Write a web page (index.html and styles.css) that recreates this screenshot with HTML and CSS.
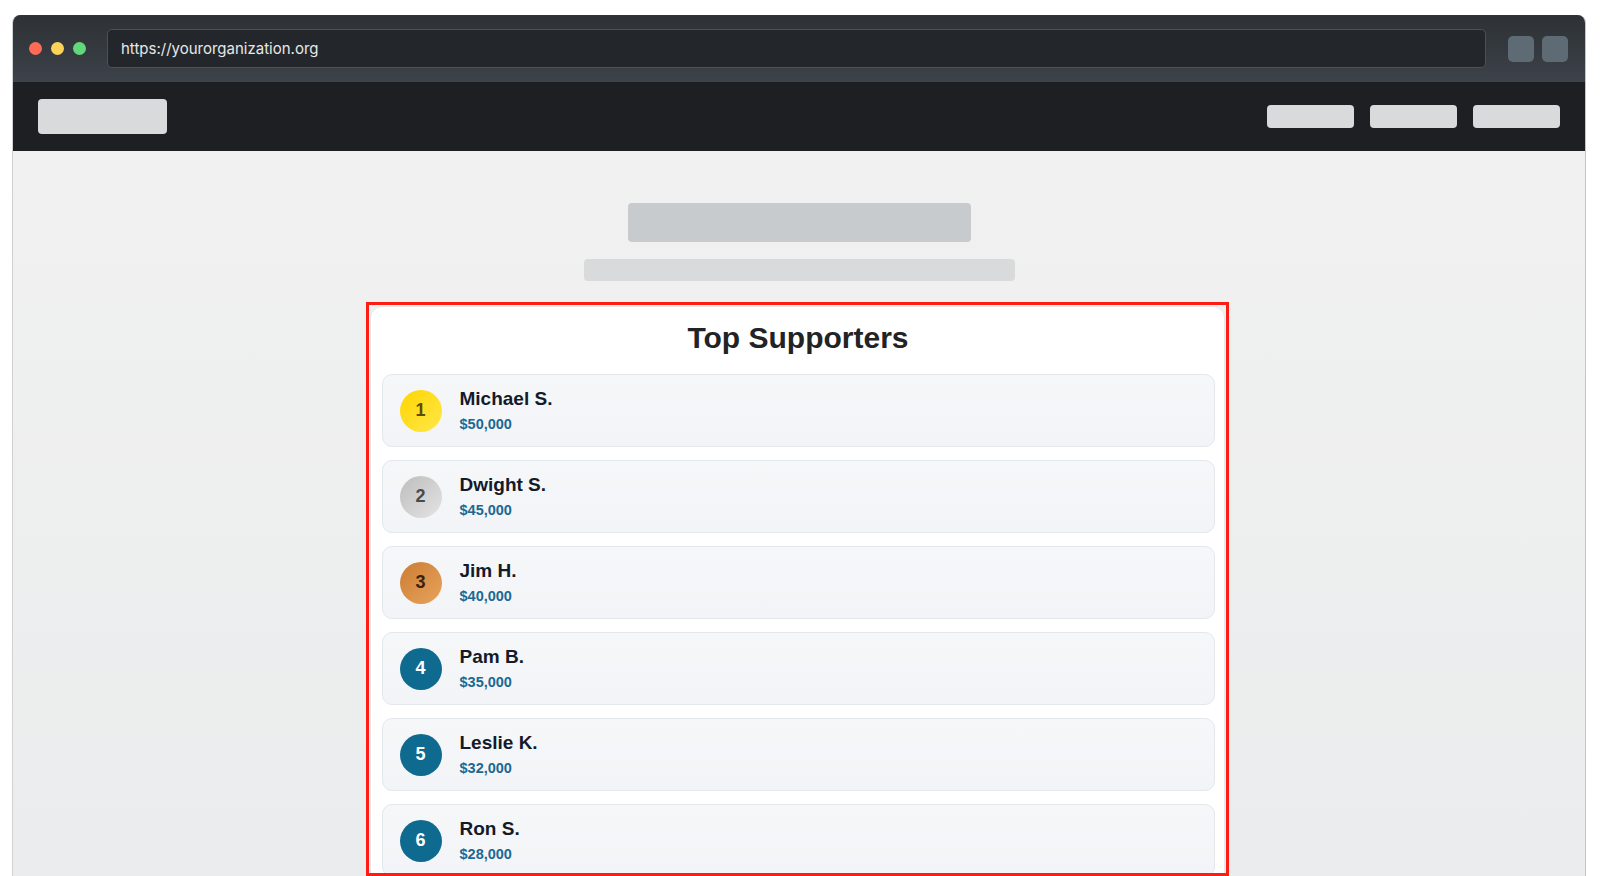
FILE: index.html
```html
<!DOCTYPE html>
<html lang="en">
<head>
<meta charset="utf-8">
<title>Top Supporters</title>
<link rel="stylesheet" href="styles.css">
</head>
<body>
<div class="window">
  <div class="chrome">
    <div class="lights">
      <span class="light red"></span>
      <span class="light yellow"></span>
      <span class="light green"></span>
    </div>
    <div class="url">https://yourorganization.org</div>
    <div class="chrome-btns">
      <span class="chrome-btn"></span>
      <span class="chrome-btn"></span>
    </div>
  </div>
  <div class="nav">
    <div class="logo-ph"></div>
    <div class="nav-links">
      <span class="nav-ph"></span>
      <span class="nav-ph"></span>
      <span class="nav-ph"></span>
    </div>
  </div>
  <div class="content">
    <div class="title-ph"></div>
    <div class="sub-ph"></div>
    <div class="highlight">
      <section class="card">
        <h2 class="card-title">Top Supporters</h2>
        <ul class="list">
          <li class="row">
            <span class="rank rank-1">1</span>
            <div class="info"><div class="name">Michael S.</div><div class="amount">$50,000</div></div>
          </li>
          <li class="row">
            <span class="rank rank-2">2</span>
            <div class="info"><div class="name">Dwight S.</div><div class="amount">$45,000</div></div>
          </li>
          <li class="row">
            <span class="rank rank-3">3</span>
            <div class="info"><div class="name">Jim H.</div><div class="amount">$40,000</div></div>
          </li>
          <li class="row">
            <span class="rank">4</span>
            <div class="info"><div class="name">Pam B.</div><div class="amount">$35,000</div></div>
          </li>
          <li class="row">
            <span class="rank">5</span>
            <div class="info"><div class="name">Leslie K.</div><div class="amount">$32,000</div></div>
          </li>
          <li class="row">
            <span class="rank">6</span>
            <div class="info"><div class="name">Ron S.</div><div class="amount">$28,000</div></div>
          </li>
        </ul>
      </section>
    </div>
  </div>
</div>
</body>
</html>
```

FILE: styles.css
```css
* { box-sizing: border-box; }
html, body { margin: 0; padding: 0; }
body {
  background: #ffffff;
  width: 1600px;
  height: 876px;
  overflow: hidden;
  font-family: "Liberation Sans", Arial, sans-serif;
}
.window {
  margin: 15px 0 0 12px;
  width: 1574px;
  height: 861px;
  border-radius: 8px 8px 0 0;
  overflow: hidden;
  display: flex;
  flex-direction: column;
  border-right: 1px solid #c4c5c6;
  border-left: 1px solid #d0d1d2;
}
.chrome {
  height: 67px;
  flex: none;
  display: flex;
  align-items: center;
  padding: 0 17px 0 16px;
  background: linear-gradient(180deg, #2e3236 0%, #353a40 55%, #3d434a 100%);
}
.lights { display: flex; gap: 9px; }
.light { width: 13px; height: 13px; border-radius: 50%; display: block; }
.red { background: #fe6a55; }
.yellow { background: #fed256; }
.green { background: #5fd97a; }
.url {
  margin-left: 21px;
  flex: 1;
  height: 39px;
  background: #23272b;
  border: 1px solid #4b5158;
  border-radius: 5px;
  display: flex;
  align-items: center;
  padding-left: 13px;
  color: #e6e7e8;
  font-family: Inter, "Noto Sans", sans-serif;
  font-size: 15px;
}
.chrome-btns { display: flex; gap: 8px; margin-left: 22px; }
.chrome-btn { width: 26px; height: 26px; border-radius: 5px; background: #5e6a74; display: block; }
.nav {
  height: 69px;
  flex: none;
  background: #1d1f23;
  display: flex;
  align-items: center;
  justify-content: space-between;
  padding: 0 25px 0 25px;
}
.logo-ph { width: 129px; height: 35px; background: #d9dadc; border-radius: 4px; }
.nav-links { display: flex; gap: 16px; }
.nav-ph { width: 87px; height: 23px; background: #d9dadc; border-radius: 4px; display: block; }
.content {
  flex: 1;
  background: linear-gradient(180deg, #f0f1f0 0%, #ebeced 100%);
  display: flex;
  flex-direction: column;
  align-items: center;
  padding-top: 52px;
  overflow: hidden;
}
.title-ph { width: 343px; height: 39px; background: #c8cbce; border-radius: 4px; }
.sub-ph { width: 431px; height: 22px; background: #d9dadc; border-radius: 4px; margin-top: 17px; }
.highlight {
  margin-top: 21px;
  width: 863px;
  height: 574px;
  flex: none;
  border: 3px solid #ff1c14;
  padding: 1px 1px 0 1px;
  overflow: hidden;
  margin-left: -4px;
}
.card {
  background: #ffffff;
  border-radius: 12px;
  border: 1px solid #e6e8ea;
  padding: 13px 9px 20px 11px;
  height: 600px;
}
.card-title {
  margin: 0;
  text-align: center;
  font-size: 30px;
  line-height: 36px;
  font-weight: 700;
  color: #222325;
}
.list {
  list-style: none;
  margin: 18px 0 0 0;
  padding: 0;
  display: flex;
  flex-direction: column;
  gap: 13px;
}
.row {
  height: 73px;
  display: flex;
  align-items: center;
  gap: 18px;
  padding-left: 17px;
  border: 1px solid #e4e7eb;
  border-radius: 10px;
  background: linear-gradient(180deg, #f6f7f9 0%, #f2f4f7 100%);
}
.rank {
  width: 42px;
  height: 42px;
  flex: none;
  border-radius: 50%;
  display: flex;
  align-items: center;
  justify-content: center;
  font-size: 18px;
  font-weight: 700;
  color: #ffffff;
  background: #0e6a8f;
}
.rank-1 { background: linear-gradient(135deg, #ffd400 0%, #ffe84a 100%); color: #5e4d00; }
.rank-2 { background: linear-gradient(135deg, #bdbdbd 0%, #e4e4e4 100%); color: #4a4a4a; }
.rank-3 { background: linear-gradient(135deg, #cb7d33 0%, #e9a35d 100%); color: #3a2210; }
.info { display: flex; flex-direction: column; }
.name {
  font-size: 19px;
  line-height: 22px;
  font-weight: 700;
  color: #131a2a;
}
.amount {
  margin-top: 5px;
  font-size: 14.5px;
  line-height: 18px;
  font-weight: 700;
  color: #1b6893;
}
```
